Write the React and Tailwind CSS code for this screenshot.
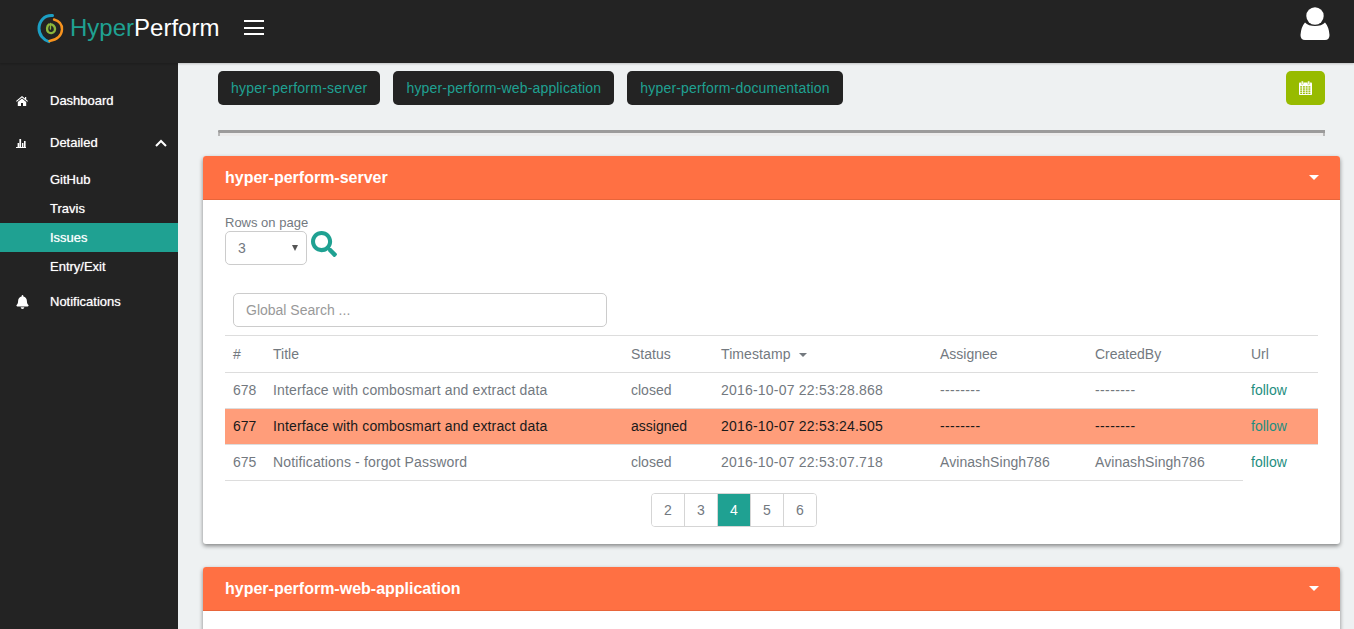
import { FaBell, FaSearch } from 'react-icons/fa';

const rows = [
  { id: 678, title: 'Interface with combosmart and extract data', status: 'closed', time: '2016-10-07 22:53:28.868', assignee: '--------', creator: '--------' },
  { id: 677, title: 'Interface with combosmart and extract data', status: 'assigned', time: '2016-10-07 22:53:24.505', assignee: '--------', creator: '--------', active: true },
  { id: 675, title: 'Notifications - forgot Password', status: 'closed', time: '2016-10-07 22:53:07.718', assignee: 'AvinashSingh786', creator: 'AvinashSingh786', last: true },
];

const repos = [
  { name: 'hyper-perform-server', tracking: 'tracking-[0.25px]' },
  { name: 'hyper-perform-web-application', tracking: 'tracking-[0.17px]' },
  { name: 'hyper-perform-documentation', tracking: 'tracking-[0.185px]' },
];

function Logo() {
  return (
    <svg width="28" height="32" viewBox="0 0 28 32" fill="none" className="mt-[2px] shrink-0">
      <path d="M15.5 2.6 C7 2 2 8.5 2 15.5 C2 22 6.5 27 12 28.6" stroke="#1c9fc4" strokeWidth="3" strokeLinecap="round" />
      <path d="M17 6.5 C22.5 8 25.2 12 25 16.5 C24.8 22 20.5 27 12.5 28" stroke="#f7931e" strokeWidth="2.4" strokeLinecap="round" />
      <path d="M12 11.5 C9.8 13 9.4 17 11.2 19 C13 20.8 16.4 20.4 17.6 18 C18.8 15.4 17.4 12.6 15 11.6" stroke="#8cb63c" strokeWidth="2.4" strokeLinecap="round" />
      <path d="M13.6 10.5 L13.4 16" stroke="#8cb63c" strokeWidth="1.4" strokeLinecap="round" />
    </svg>
  );
}

function HomeIcon() {
  return (
    <svg width="12" height="10" viewBox="0 0 12 10" fill="#fff">
      <path d="M6 0 L9 2.4 V1 H10.2 V3.4 L12 4.9 L11.3 5.7 L6 1.5 L.7 5.7 L0 4.9 Z" />
      <path d="M1.8 6 L6 2.6 L10.2 6 V10 H7 V7 H5 V10 H1.8 Z" />
    </svg>
  );
}

function BarsIcon() {
  return (
    <svg width="10" height="9" viewBox="0 0 10 9" fill="#fff">
      <rect x="0" y="8" width="10" height="1" />
      <rect x="1.6" y="4" width="1.6" height="5" />
      <rect x="3.4" y="0" width="1.7" height="9" />
      <rect x="6" y="4" width="1.4" height="5" />
      <rect x="8" y="2" width="1.6" height="7" />
    </svg>
  );
}

function AngleUp() {
  return (
    <svg width="12" height="8" viewBox="0 0 12 8" fill="none" stroke="#fff" strokeWidth="2">
      <path d="M1 7 L6 2 L11 7" />
    </svg>
  );
}

function UserIcon() {
  return (
    <svg width="30" height="33" viewBox="0 0 30 33" fill="#fff" className="mb-[16px]">
      <circle cx="15" cy="9" r="8.7" />
      <path d="M5 15.5 Q1 20 .5 28 Q.5 33 5 33 H25 Q29.5 33 29.5 28 Q29 20 25 15.5 C21 20.2 9 20.2 5 15.5 Z" />
    </svg>
  );
}

function CalendarIcon() {
  const holes = [];
  for (let r = 0; r < 4; r++) {
    for (let c = 0; c < 4; c++) {
      holes.push(<rect key={`${r}-${c}`} x={1.2 + c * 2.75} y={5.2 + r * 2.15} width="1.9" height="1.4" fill="#97bb00" />);
    }
  }
  return (
    <svg width="13" height="14" viewBox="0 0 13 14">
      <rect x="0" y="1.5" width="13" height="12.5" rx="0.8" fill="#fff" />
      <rect x="2.4" y="0" width="1.8" height="3.6" rx="0.6" fill="#fff" stroke="#97bb00" strokeWidth="0.4" />
      <rect x="8.8" y="0" width="1.8" height="3.6" rx="0.6" fill="#fff" stroke="#97bb00" strokeWidth="0.4" />
      {holes}
    </svg>
  );
}

function NavItem({ icon, label, right, className = 'h-[42px]' }) {
  return (
    <div className={`flex items-center pl-[16px] pr-[11px] text-white [text-shadow:0_0_1px_rgba(255,255,255,0.7)] ${className}`}>
      <span className="flex w-[34px] shrink-0 items-center">{icon}</span>
      <span className="flex-1">{label}</span>
      {right}
    </div>
  );
}

function Sidebar() {
  return (
    <aside className="w-[178px] shrink-0 bg-[#232323] pt-[17px] text-[13px]">
      <NavItem icon={<HomeIcon />} label="Dashboard" />
      <NavItem icon={<BarsIcon />} label="Detailed" right={<AngleUp />} />
      <div className="pt-[1px] text-white [text-shadow:0_0_1px_rgba(255,255,255,0.7)]">
        <div className="flex h-[29px] items-center pl-[50px]">GitHub</div>
        <div className="flex h-[29px] items-center pl-[50px]">Travis</div>
        <div className="flex h-[29px] items-center bg-[#1fa192] pl-[50px]">Issues</div>
        <div className="flex h-[29px] items-center pl-[50px]">Entry/Exit</div>
      </div>
      <NavItem icon={<FaBell className="h-[14px] w-[13px] text-white" />} label="Notifications" className="h-[41px]" />
    </aside>
  );
}

function Panel({ title, children }) {
  return (
    <section className="mb-[23px] ml-[25px] mr-[14px] rounded-[3px] bg-white shadow-[0_2px_4px_rgba(0,0,0,0.45)]">
      <div className="flex h-[44px] items-center justify-between rounded-t-[3px] border-b border-[#e8653a] bg-[#ff7043] pl-[22px] pr-[21px]">
        <h2 className="text-[16px] font-bold text-white">{title}</h2>
        <span className="h-0 w-0 border-x-[5px] border-t-[5px] border-x-transparent border-t-white" />
      </div>
      {children}
    </section>
  );
}

function IssuesTable() {
  return (
    <table className="w-[1093px] table-fixed border-collapse text-[14px] text-[#73797f]">
      <colgroup>
        <col className="w-[40px]" />
        <col className="w-[358px]" />
        <col className="w-[90px]" />
        <col className="w-[219px]" />
        <col className="w-[155px]" />
        <col className="w-[156px]" />
        <col className="w-[75px]" />
      </colgroup>
      <thead>
        <tr className="h-[37px] border-y border-[#dddddd] text-left">
          <th className="px-2 font-normal">#</th>
          <th className="px-2 font-normal">Title</th>
          <th className="px-2 font-normal">Status</th>
          <th className="px-2 font-normal tracking-[0.1px]">
            Timestamp
            <span className="ml-[8px] inline-block h-0 w-0 border-x-[4px] border-t-[4px] border-x-transparent border-t-[#73797f] align-middle" />
          </th>
          <th className="px-2 font-normal">Assignee</th>
          <th className="px-2 font-normal">CreatedBy</th>
          <th className="px-2 font-normal">Url</th>
        </tr>
      </thead>
      <tbody>
        {rows.map((row) => {
          const cellBorder = row.last ? 'border-b border-[#dddddd]' : '';
          return (
            <tr
              key={row.id}
              className={`h-[36px] ${row.last ? '' : 'border-b border-[#dddddd]'} ${row.active ? 'bg-[#ff9d7a] text-[#1a1a1a]' : ''}`}
            >
              <td className={`px-2 ${cellBorder}`}>{row.id}</td>
              <td className={`px-2 tracking-[0.14px] ${cellBorder}`}>{row.title}</td>
              <td className={`px-2 ${cellBorder}`}>{row.status}</td>
              <td className={`px-2 tracking-[0.21px] ${cellBorder}`}>{row.time}</td>
              <td className={`px-2 ${row.last ? 'tracking-[0.07px]' : 'tracking-[0.4px]'} ${cellBorder}`}>{row.assignee}</td>
              <td className={`px-2 ${row.last ? 'tracking-[0.07px]' : 'tracking-[0.4px]'} ${cellBorder}`}>{row.creator}</td>
              <td className="px-2 text-[#1e8e80]">follow</td>
            </tr>
          );
        })}
      </tbody>
    </table>
  );
}

function Pagination() {
  return (
    <div className="mt-[12px] flex justify-center pr-[75px]">
      <div className="flex h-[34px] w-[166px] overflow-hidden rounded-[4px] border border-[#d5d5d5] text-[14px] text-[#73797f]">
        {[2, 3, 4, 5, 6].map((page, i) => (
          <span
            key={page}
            className={`flex flex-1 items-center justify-center ${i > 0 ? 'border-l border-[#d5d5d5]' : ''} ${page === 4 ? 'bg-[#1fa192] text-white' : 'bg-white'}`}
          >
            {page}
          </span>
        ))}
      </div>
    </div>
  );
}

export default function App() {
  return (
    <div className="flex h-screen flex-col overflow-hidden bg-[#eef1f2] font-['Liberation_Sans',Arial,sans-serif]">
      <header className="z-10 flex h-[63px] shrink-0 items-center justify-between bg-[#232323] pl-[37px] pr-[24px] shadow-[0_1px_2px_rgba(0,0,0,0.2)]">
        <div className="mb-[8px] flex items-center">
          <Logo />
          <div className="ml-[5px] text-[24px] leading-none text-[#1fa192]">
            Hyper<span className="text-white">Perform</span>
          </div>
          <div className="ml-[25px] flex w-[20px] flex-col gap-[4.5px]">
            <span className="h-[2px] bg-white" />
            <span className="h-[2px] bg-white" />
            <span className="h-[2px] bg-white" />
          </div>
        </div>
        <UserIcon />
      </header>

      <div className="flex min-h-0 flex-1">
        <Sidebar />
        <main className="min-w-0 flex-1 overflow-hidden">
          <div className="ml-[40px] mr-[29px] pt-[8px]">
            <div className="flex items-start justify-between">
              <div className="flex gap-[13px]">
                {repos.map((repo) => (
                  <span key={repo.name} className={`flex h-[34px] items-center rounded-[5px] bg-[#232323] px-[13px] text-[14px] text-[#1fa192] ${repo.tracking}`}>
                    {repo.name}
                  </span>
                ))}
              </div>
              <span className="flex h-[34px] w-[39px] items-center justify-center rounded-[5px] bg-[#97bb00]">
                <CalendarIcon />
              </span>
            </div>
            <div className="mt-[25px] h-[3px] rounded-l-[1px] bg-[#9b9b9b]" />
            <div className="h-[3px] border-x-[2px] border-x-[#b8b8b8] bg-[#ebebeb]" />
          </div>

          <div className="mt-[20px]">
            <Panel title="hyper-perform-server">
              <div className="h-[344px] px-[22px] pt-[15px]">
                <div className="text-[13px] leading-[15px] text-[#73797f]">Rows on page</div>
                <div className="mt-[1px] flex items-start">
                  <div className="flex h-[34px] w-[82px] items-center justify-between rounded-[5px] border border-[#cccccc] pl-[12px] pr-[8px] text-[14px] text-[#73797f]">
                    3
                    <span className="h-0 w-0 border-x-[3px] border-t-[6px] border-x-transparent border-t-[#555555]" />
                  </div>
                  <FaSearch className="ml-[4px] h-[26px] w-[26px] text-[#1fa192]" />
                </div>
                <div className="ml-[8px] mt-[28px] flex h-[34px] w-[374px] items-center rounded-[5px] border border-[#cccccc] px-[12px] text-[14px] text-[#999999]">
                  Global Search ...
                </div>
                <div className="mt-[8px]">
                  <IssuesTable />
                </div>
                <Pagination />
              </div>
            </Panel>
            <Panel title="hyper-perform-web-application">
              <div className="px-[22px] pt-[15px] text-[13px] leading-[15px] text-[#73797f]">Rows on page</div>
            </Panel>
          </div>
        </main>
      </div>
    </div>
  );
}
